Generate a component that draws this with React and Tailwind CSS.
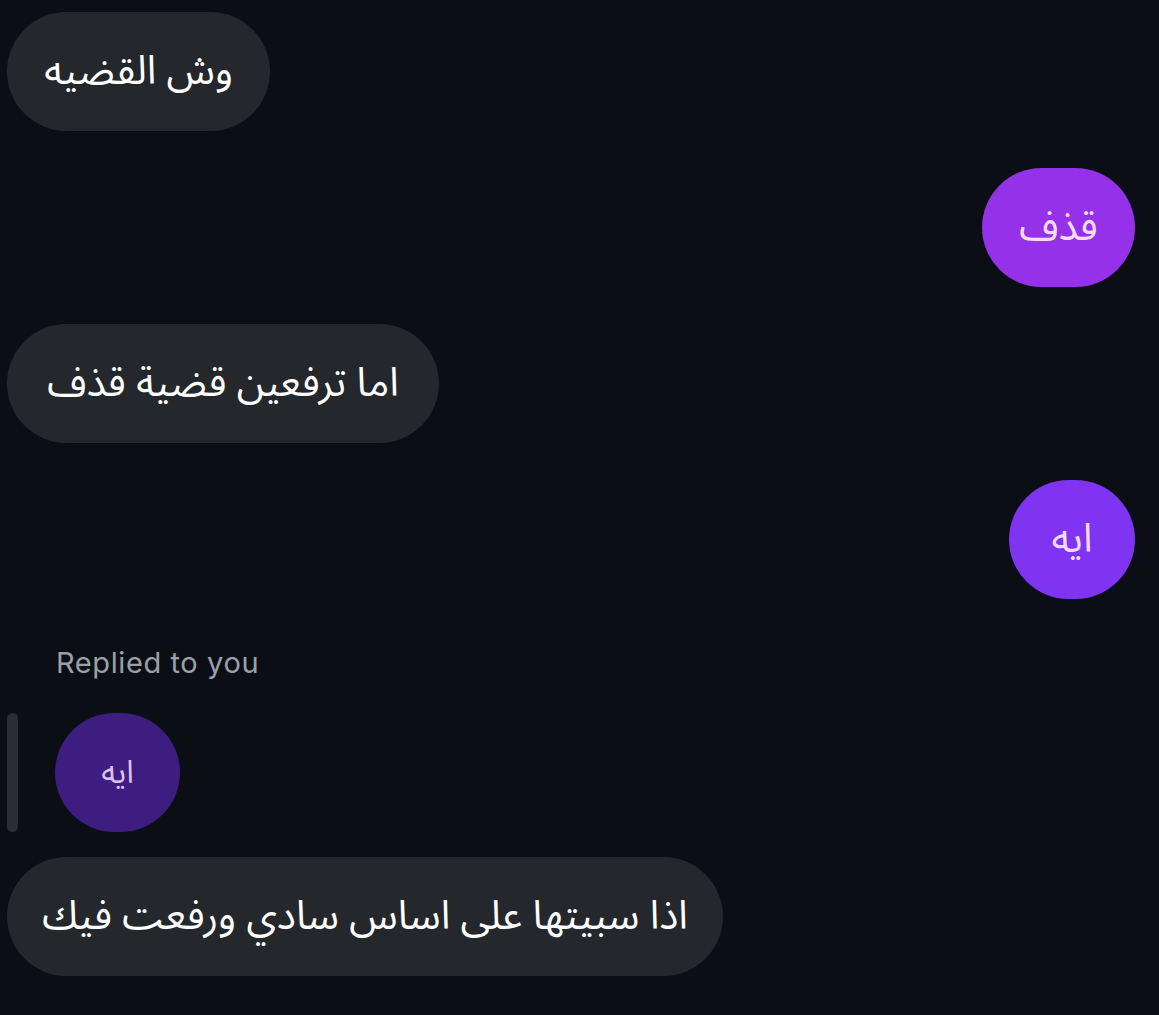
import React from "react";

const font = { fontFamily: '"Noto Sans Arabic", "DejaVu Sans", "Noto Sans", sans-serif' };

function Bubble({ children, className = "" }) {
  return (
    <div
      dir="rtl"
      className={`h-[119px] rounded-full flex items-center justify-center text-[40px] leading-none ${className}`}
    >
      {children}
    </div>
  );
}

export default function App() {
  return (
    <div
      className="w-[1159px] h-[1015px] bg-[#0b0f15] overflow-hidden pt-[12px] pl-[7px] pr-[24px] flex flex-col"
      style={font}
    >
      <div className="flex justify-start">
        <Bubble className="bg-[#24272b] text-white w-[263px]">وش القضيه</Bubble>
      </div>
      <div className="flex justify-end mt-[37px]">
        <Bubble className="bg-[#9431e9] text-[#f7dcfb] w-[153px]">قذف</Bubble>
      </div>
      <div className="flex justify-start mt-[37px]">
        <Bubble className="bg-[#24272b] text-white w-[432px]">اما ترفعين قضية قذف</Bubble>
      </div>
      <div className="flex justify-end mt-[37px]">
        <Bubble className="bg-[#7f34f1] text-[#f3dcfb] w-[126px]">ايه</Bubble>
      </div>
      <div
        className="mt-[48px] pl-[49px] text-[29px] tracking-[0.6px] text-[#9aa0a8] leading-[32px]"
        style={{ fontFamily: '"Inter", "Roboto", sans-serif' }}
      >
        Replied to you
      </div>
      <div className="flex mt-[34px] gap-[37px]">
        <div className="w-[11px] h-[119px] rounded-full bg-[#2a2e33]" />
        <div
          dir="rtl"
          className="w-[125px] h-[119px] rounded-full bg-[#3e1d80] text-[#dcc0f2] flex items-center justify-center text-[32px] leading-none"
        >
          ايه
        </div>
      </div>
      <div className="flex justify-start mt-[25px]">
        <Bubble className="bg-[#24272b] text-white w-[716px]">اذا سبيتها على اساس سادي ورفعت فيك</Bubble>
      </div>
    </div>
  );
}
